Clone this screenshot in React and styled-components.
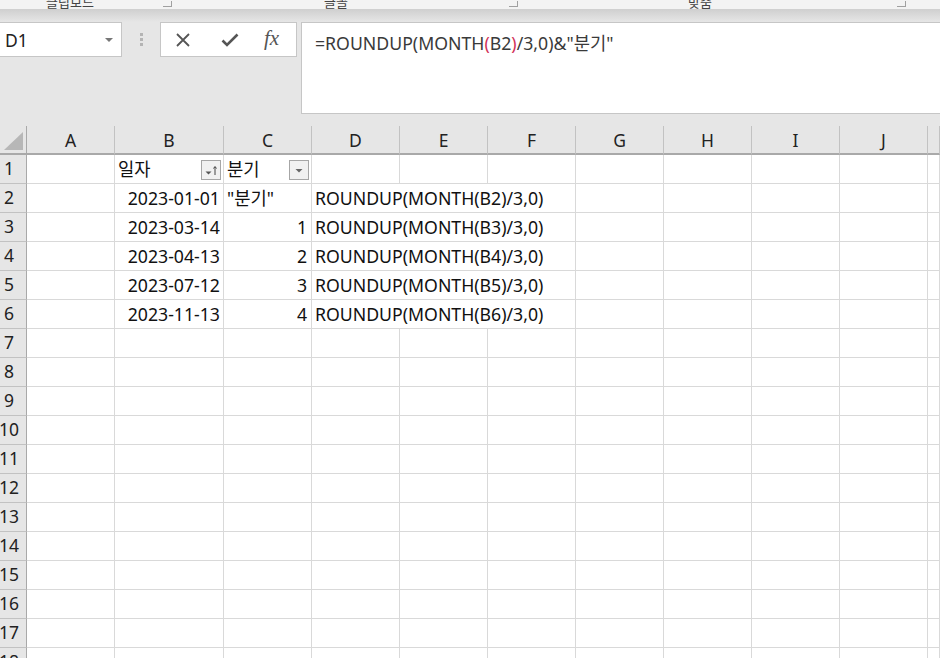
import React from 'react';
import styled, { createGlobalStyle } from 'styled-components';

const GlobalStyle = createGlobalStyle`
  html, body {
    margin: 0;
    padding: 0;
    background: #e6e6e6;
    font-family: "Noto Sans", "Noto Sans CJK KR", sans-serif;
    overflow: hidden;
  }
  * { box-sizing: border-box; }
`;

const Page = styled.div`
  width: 940px;
  height: 658px;
  overflow: hidden;
  display: flex;
  flex-direction: column;

  & > * {
    flex-shrink: 0;
  }
`;

const Ribbon = styled.div`
  height: 9px;
  background: #f3f3f3;
  position: relative;
  overflow: hidden;
`;

const RibbonLabel = styled.span`
  position: absolute;
  left: ${p => p.$x}px;
  bottom: 1px;
  font-size: 13px;
  line-height: 13px;
  color: #444;
  font-family: "Noto Sans CJK KR", sans-serif;
`;

const Launcher = styled.span`
  position: absolute;
  left: ${p => p.$x}px;
  bottom: 2px;
  width: 9px;
  height: 6px;
  border-right: 1px solid #a0a0a0;
  border-bottom: 1px solid #a0a0a0;
`;

const Shadow = styled.div`
  height: 13px;
  background: linear-gradient(#cfcfcf, #e6e6e6);
`;

const FormulaRow = styled.div`
  display: flex;
  align-items: flex-start;
  height: 92px;
`;

const NameBox = styled.div`
  width: 123px;
  height: 35px;
  margin-left: -1px;
  background: #fff;
  border: 1px solid #c6c6c6;
  display: flex;
  align-items: center;
  justify-content: space-between;
  padding: 0 8px 0 5px;
  font-size: 17.5px;
  color: #222;
`;

const Caret = styled.span`
  width: 0;
  height: 0;
  border-left: 4px solid transparent;
  border-right: 4px solid transparent;
  border-top: 4px solid #777;
`;

const Grip = styled.div`
  width: 38px;
  height: 35px;
  display: flex;
  flex-direction: column;
  align-items: center;
  justify-content: center;
  gap: 2px;

  span {
    width: 3px;
    height: 3px;
    background: #b4b4b4;
  }
`;

const ActionBox = styled.div`
  width: 137px;
  height: 35px;
  background: #fff;
  border: 1px solid #c6c6c6;
  display: flex;
  align-items: center;
  padding-left: 14px;
`;

const ActionIcon = styled.span`
  width: ${p => p.$w}px;
  display: flex;
  align-items: center;
  justify-content: flex-start;
`;

const Fx = styled.span`
  font-family: "Liberation Serif", serif;
  font-style: italic;
  font-size: 21px;
  color: #555;
  line-height: 1;
  margin-top: -3px;
`;

const FormulaInput = styled.div`
  flex: 1;
  height: 92px;
  margin-left: 4px;
  margin-right: -2px;
  background: #fff;
  border: 1px solid #c6c6c6;
  padding: 6px 0 0 13px;
  font-size: 17.7px;
  color: #3a3a3a;
  white-space: nowrap;
`;

const Paren = styled.span`
  color: #d2335a;
`;

const Sheet = styled.div`
  margin-top: 12px;
  flex: 1 1 auto !important;
  min-height: 0;
  overflow: hidden;
  display: grid;
  grid-template-columns: 27px 88px 109px 88px repeat(7, 88px) 1fr;
  grid-auto-rows: 29px;
  background: #fff;
  align-content: start;
`;

const Corner = styled.div`
  background: #e6e6e6;
  border-right: 1px solid #a9a9a9;
  border-bottom: 2px solid #a9a9a9;
  position: relative;

  &::after {
    content: "";
    position: absolute;
    right: 3px;
    bottom: 3px;
    width: 0;
    height: 0;
    border-left: 19px solid transparent;
    border-bottom: 18px solid #b7b7b7;
  }
`;

const ColHead = styled.div`
  background: #e6e6e6;
  border-bottom: 2px solid #a9a9a9;
  border-right: 1px solid #c2c2c2;
  display: flex;
  align-items: center;
  justify-content: center;
  font-size: 17.5px;
  line-height: 1;
  color: #222;
  padding-top: 2px;
`;

const RowHead = styled.div`
  background: #e6e6e6;
  border-right: 1px solid #a9a9a9;
  border-bottom: 1px solid #c2c2c2;
  display: flex;
  align-items: center;
  justify-content: center;
  padding-right: 8px;
  font-size: 17.5px;
  line-height: 1;
  color: #222;
`;

const Cell = styled.div`
  grid-column: span ${p => p.$span || 1};
  border-right: 1px solid #d9d9d9;
  border-bottom: 1px solid #d9d9d9;
  display: flex;
  align-items: center;
  justify-content: ${p => (p.$right ? 'flex-end' : 'flex-start')};
  padding: 1px ${p => (p.$right ? p.$pr || 3 : 3)}px 0 3px;
  font-size: 17.7px;
  line-height: 1;
  color: #111;
  white-space: nowrap;
  overflow: visible;
  position: relative;
`;

const FilterButton = styled.span`
  position: absolute;
  right: 2px;
  bottom: 3px;
  width: 20px;
  height: 20px;
  border: 1px solid #a6a6a6;
  background: #f1f1f1;
  display: flex;
  align-items: center;
  justify-content: center;
`;

const COLS = ['A', 'B', 'C', 'D', 'E', 'F', 'G', 'H', 'I', 'J', ''];

const data = [
  ['2023-01-01', '"분기"', 'B2'],
  ['2023-03-14', '1', 'B3'],
  ['2023-04-13', '2', 'B4'],
  ['2023-07-12', '3', 'B5'],
  ['2023-11-13', '4', 'B6'],
];

function Filter({ sorted }) {
  return (
    <FilterButton>
      <svg width="18" height="18" viewBox="0 0 18 18">
        {sorted ? (
          <>
            <path d="M3.5 10.5h6l-3 3z" fill="#555" />
            <path d="M13 6v8M11.5 7.5 13 5.5l1.5 2" stroke="#444" strokeWidth="1" fill="none" />
          </>
        ) : (
          <path d="M5.5 8h7l-3.5 3.5z" fill="#666" />
        )}
      </svg>
    </FilterButton>
  );
}

function emptyCells(n, key) {
  return Array.from({ length: n }, (_, i) => <Cell key={key + i} />);
}

export default function App() {
  const rows = [];
  for (let r = 1; r <= 18; r++) {
    const cells = [<RowHead key={'h' + r}>{r}</RowHead>];
    if (r === 1) {
      cells.push(<Cell key="a1" />);
      cells.push(
        <Cell key="b1">
          일자
          <Filter sorted />
        </Cell>
      );
      cells.push(
        <Cell key="c1">
          분기
          <Filter />
        </Cell>
      );
      cells.push(...emptyCells(8, 'r1'));
    } else if (r <= 6) {
      const [date, q, ref] = data[r - 2];
      const isText = q.startsWith('"');
      cells.push(<Cell key={'a' + r} />);
      cells.push(<Cell key={'b' + r} $right>{date}</Cell>);
      cells.push(
        <Cell key={'c' + r} $right={!isText} $pr={4}>
          {q}
        </Cell>
      );
      cells.push(
        <Cell key={'d' + r} $span={3}>
          ROUNDUP(MONTH({ref})/3,0)
        </Cell>
      );
      cells.push(...emptyCells(5, 'r' + r));
    } else {
      cells.push(...emptyCells(11, 'r' + r));
    }
    rows.push(...cells);
  }

  return (
    <Page>
      <GlobalStyle />
      <Ribbon>
        <RibbonLabel $x={46}>클립보드</RibbonLabel>
        <Launcher $x={163} />
        <RibbonLabel $x={324}>글꼴</RibbonLabel>
        <Launcher $x={509} />
        <RibbonLabel $x={688}>맞춤</RibbonLabel>
        <Launcher $x={897} />
      </Ribbon>
      <Shadow />
      <FormulaRow>
        <NameBox>
          D1
          <Caret />
        </NameBox>
        <Grip>
          <span />
          <span />
          <span />
        </Grip>
        <ActionBox>
          <ActionIcon $w={46}>
            <svg width="16" height="16" viewBox="0 0 16 16">
              <path d="M2 2l12 12M14 2L2 14" stroke="#555" strokeWidth="1.8" />
            </svg>
          </ActionIcon>
          <ActionIcon $w={43}>
            <svg width="18" height="14" viewBox="0 0 18 14">
              <path d="M1.5 7.5l4.5 4.5L16.5 1.5" stroke="#555" strokeWidth="2.6" fill="none" />
            </svg>
          </ActionIcon>
          <ActionIcon $w={30}>
            <Fx>fx</Fx>
          </ActionIcon>
        </ActionBox>
        <FormulaInput>
          =ROUNDUP(MONTH<Paren>(</Paren>B2<Paren>)</Paren>/3,0)&amp;"분기"
        </FormulaInput>
      </FormulaRow>
      <Sheet>
        <Corner />
        {COLS.map((c, i) => (
          <ColHead key={'col' + i}>{c}</ColHead>
        ))}
        {rows}
      </Sheet>
    </Page>
  );
}
